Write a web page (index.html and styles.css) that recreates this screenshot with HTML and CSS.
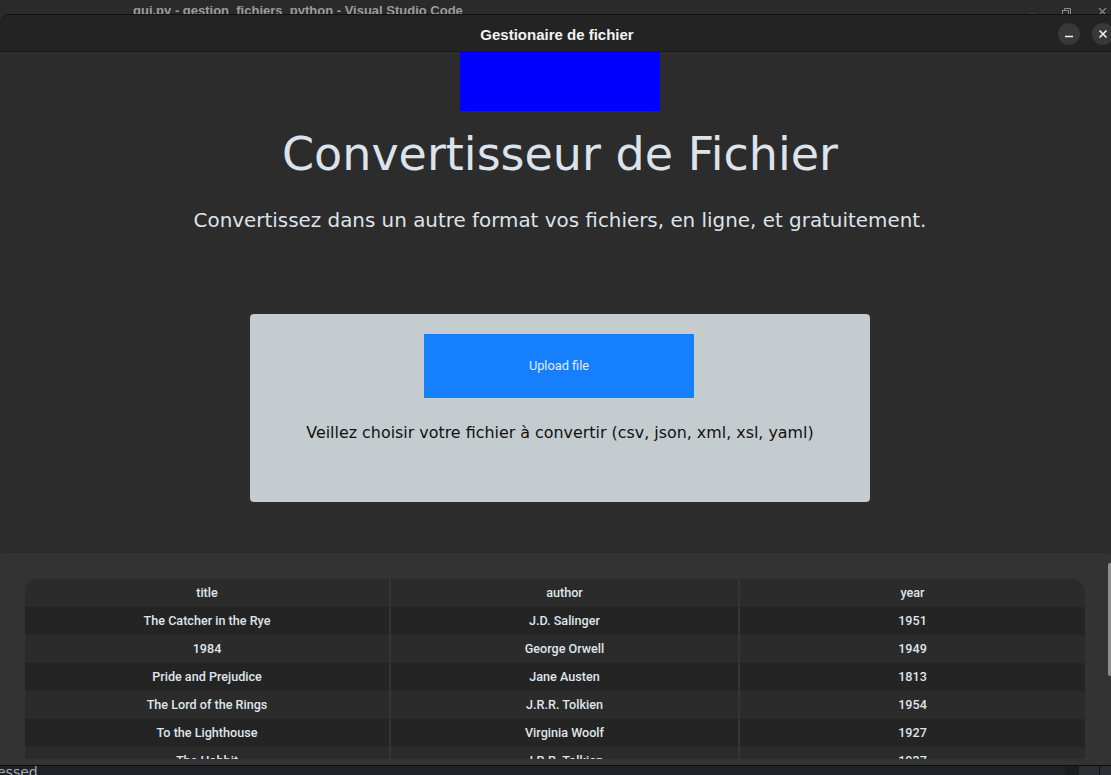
FILE: index.html
```html
<!DOCTYPE html>
<html lang="fr">
<head>
<meta charset="utf-8">
<title>Gestionaire de fichier</title>
<link rel="stylesheet" href="styles.css">
</head>
<body>
<div class="desktop">
  <div class="behind-bar">
    <span class="behind-title">gui.py - gestion_fichiers_python - Visual Studio Code</span>
    <div class="behind-controls">
      <span class="bc-min"></span>
      <svg class="bc-restore" width="9" height="8" viewBox="0 0 9 8"><path d="M2.5 2.5V0.5H8.5V6.5H6.5" fill="none" stroke="#8d8d8d" stroke-width="1"/><rect x="0.5" y="2.5" width="6" height="6" fill="none" stroke="#8d8d8d" stroke-width="1"/></svg>
      <svg class="bc-close" width="9" height="8" viewBox="0 0 9 8"><path d="M1 0L8 7M8 0L1 7" stroke="#8d8d8d" stroke-width="1.2"/></svg>
    </div>
  </div>

  <div class="window">
    <header class="titlebar">
      <span class="titlebar-spacer"></span>
      <span class="titlebar-title">Gestionaire de fichier</span>
      <div class="titlebar-buttons">
        <span class="tb-btn"><svg width="10" height="10" viewBox="0 0 10 10"><path d="M1 7.5H9" stroke="#f2f2f2" stroke-width="1.6"/></svg></span>
        <span class="tb-btn"><svg width="10" height="10" viewBox="0 0 10 10"><path d="M1.5 1.5L8.5 8.5M8.5 1.5L1.5 8.5" stroke="#f2f2f2" stroke-width="1.6"/></svg></span>
      </div>
    </header>

    <main class="content">
      <div class="logo"></div>
      <h1 class="heading">Convertisseur de Fichier</h1>
      <p class="subtitle">Convertissez dans un autre format vos fichiers, en ligne, et gratuitement.</p>
      <section class="card">
        <button class="upload-btn" type="button">Upload file</button>
        <p class="card-text">Veillez choisir votre fichier à convertir (csv, json, xml, xsl, yaml)</p>
      </section>
    </main>

    <section class="table-panel">
      <div class="table-wrap">
        <div class="grid">
          <div class="row head"><div class="cell">title</div><div class="cell">author</div><div class="cell">year</div></div>
          <div class="row odd"><div class="cell">The Catcher in the Rye</div><div class="cell">J.D. Salinger</div><div class="cell">1951</div></div>
          <div class="row even"><div class="cell">1984</div><div class="cell">George Orwell</div><div class="cell">1949</div></div>
          <div class="row odd"><div class="cell">Pride and Prejudice</div><div class="cell">Jane Austen</div><div class="cell">1813</div></div>
          <div class="row even"><div class="cell">The Lord of the Rings</div><div class="cell">J.R.R. Tolkien</div><div class="cell">1954</div></div>
          <div class="row odd"><div class="cell">To the Lighthouse</div><div class="cell">Virginia Woolf</div><div class="cell">1927</div></div>
          <div class="row even"><div class="cell">The Hobbit</div><div class="cell">J.R.R. Tolkien</div><div class="cell">1937</div></div>
        </div>
      </div>
      <div class="scrollbar"></div>
    </section>
  </div>

  <footer class="statusbar">
    <span class="status-text">essed</span>
    <span class="status-spacer"></span>
    <span class="status-block dark"></span>
    <span class="status-block light"></span>
    <span class="status-block light2"></span>
  </footer>
</div>
</body>
</html>
```

FILE: styles.css
```css
* { box-sizing: border-box; }

html, body {
  margin: 0;
  padding: 0;
  width: 1111px;
  height: 775px;
  overflow: hidden;
  background: #2b2b2b;
}

.desktop {
  width: 1111px;
  height: 775px;
  display: flex;
  flex-direction: column;
  overflow: hidden;
  background: #2b2b2b;
}

/* VS Code window title peeking above */
.behind-bar {
  height: 14px;
  flex: 0 0 14px;
  display: flex;
  align-items: flex-start;
  overflow: hidden;
  background: #2a2a2a;
}
.behind-title {
  padding-left: 133px;
  padding-top: 1px;
  font-family: "Liberation Sans", Arial, sans-serif;
  font-weight: 700;
  font-size: 13px;
  line-height: 19px;
  color: #9c9c9c;
  white-space: nowrap;
}
.behind-controls {
  margin-left: auto;
  display: flex;
  align-items: flex-start;
  padding-top: 8px;
  padding-right: 4px;
}
.bc-min {
  width: 8px;
  height: 2px;
  margin-top: 5px;
  margin-right: 25px;
  background: #3a3a3a;
}
.bc-restore { margin-right: 27px; }

/* The app window */
.window {
  width: 1120px;
  flex: 0 0 751px;
  display: flex;
  flex-direction: column;
  border-top: 1px solid #101010;
  border-radius: 9px 9px 0 0;
  overflow: hidden;
  background: #2c2c2c;
}

.titlebar {
  height: 37px;
  flex: 0 0 37px;
  display: flex;
  align-items: center;
  padding-top: 2px;
  background: #232323;
  border-bottom: 1px solid #1a1a1a;
}
.titlebar-spacer { flex: 1; }
.titlebar-title {
  font-family: "Liberation Sans", Arial, sans-serif;
  font-weight: 700;
  font-size: 15px;
  color: #f2f2f2;
}
.titlebar-buttons {
  flex: 1;
  display: flex;
  justify-content: flex-end;
  gap: 12px;
  padding-right: 6px;
}
.tb-btn {
  width: 22px;
  height: 22px;
  border-radius: 50%;
  background: #383838;
  display: flex;
  align-items: center;
  justify-content: center;
}

.content {
  flex: 0 0 501px;
  display: flex;
  flex-direction: column;
  align-items: center;
  background: #2c2c2c;
}
.logo {
  width: 200px;
  height: 59px;
  background: #0000ff;
}
.heading {
  margin: 16px 0 0;
  font-family: "DejaVu Sans", sans-serif;
  font-weight: 400;
  font-size: 46px;
  line-height: 54px;
  color: #dde3ea;
}
.subtitle {
  margin: 28px 0 0;
  font-family: "DejaVu Sans", sans-serif;
  font-size: 19.9px;
  line-height: 24px;
  color: #dde3ea;
}

.card {
  margin-top: 81px;
  width: 620px;
  height: 188px;
  padding-top: 20px;
  display: flex;
  flex-direction: column;
  align-items: center;
  background: #c5cccf;
  border-radius: 4px;
}
.upload-btn {
  width: 270px;
  height: 64px;
  margin-right: 2px;
  border: none;
  border-radius: 0;
  background: #167ffc;
  color: #e3ecf7;
  font-family: Roboto, sans-serif;
  font-size: 12.8px;
  font-weight: 400;
  padding: 0 0 2px;
}
.card-text {
  margin: 25px 0 0;
  font-family: "DejaVu Sans", sans-serif;
  font-size: 15.9px;
  line-height: 20px;
  color: #111111;
}

/* Table panel */
.table-panel {
  width: 1111px;
  flex: 0 0 212px;
  display: flex;
  align-items: flex-start;
  padding: 10px 0 0 25px;
  background: #333333;
  border-radius: 4px 4px 0 0;
  overflow: hidden;
}
.table-wrap {
  flex: 0 0 1060px;
  height: 180px;
  margin-top: 16px;
  border-radius: 13px 13px 0 0;
  overflow: hidden;
}
.row {
  display: grid;
  grid-template-columns: 364px 349px 347px;
  height: 28px;
}
.row.head, .row.even { background: #2b2b2b; }
.row.odd { background: #242424; }
.cell {
  display: flex;
  align-items: center;
  justify-content: center;
  padding-bottom: 2px;
  font-family: Roboto, sans-serif;
  font-weight: 500;
  font-size: 12.6px;
  color: #dfe5ec;
  white-space: nowrap;
}
.cell + .cell { border-left: 2px solid #353535; }

.scrollbar {
  width: 3px;
  height: 113px;
  margin-left: 23px;
  border-radius: 2px 0 0 2px;
  background: #8f8f8f;
}

/* VS Code status bar below */
.statusbar {
  flex: 1;
  display: flex;
  align-items: stretch;
  background: #1e2226;
  border-top: 1px solid #0d0d0d;
  overflow: hidden;
}
.status-text {
  font-family: "DejaVu Sans", sans-serif;
  font-size: 14px;
  line-height: 16px;
  margin-top: -2px;
  text-indent: -3px;
  color: #a4acb4;
}
.status-spacer { flex: 1; }
.status-block.dark { width: 13px; background: #1a1c1f; }
.status-block.light { width: 21px; background: #2a2d31; border-right: 1px solid #111; }
.status-block.light2 { width: 11px; background: #2a2d31; }
```
